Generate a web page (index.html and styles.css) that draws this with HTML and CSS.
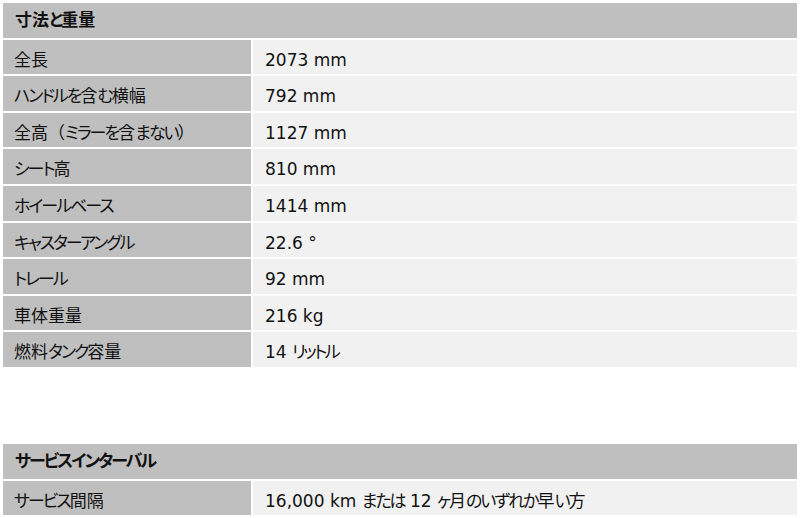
FILE: index.html
```html
<!DOCTYPE html>
<html lang="ja">
<head>
<meta charset="utf-8">
<title>仕様</title>
<link rel="stylesheet" href="styles.css">
</head>
<body>
<div class="page">
  <section class="spec">
    <div class="head">寸法<span class="kana">と</span>重量</div>
    <div class="label">全長</div><div class="value">2073 mm</div>
    <div class="label"><span class="kana">ハンドルを</span>含<span class="kana">む</span>横幅</div><div class="value">792 mm</div>
    <div class="label">全高<span class="fw">（</span><span class="kana">ミラーを</span>含<span class="kana">まない</span><span class="fw">）</span></div><div class="value">1127 mm</div>
    <div class="label"><span class="kana">シート</span>高</div><div class="value">810 mm</div>
    <div class="label"><span class="kana">ホイールベース</span></div><div class="value">1414 mm</div>
    <div class="label"><span class="kana">キャスターアングル</span></div><div class="value">22.6 °</div>
    <div class="label"><span class="kana">トレール</span></div><div class="value">92 mm</div>
    <div class="label">車体重量</div><div class="value">216 kg</div>
    <div class="label">燃料<span class="kana">タンク</span>容量</div><div class="value">14 <span class="kana narrow">リットル</span></div>
  </section>
  <section class="spec second">
    <div class="head"><span class="kana">サービスインターバル</span></div>
    <div class="label"><span class="kana">サービス</span>間隔</div><div class="value">16,000 km <span class="kana soft">または</span> 12 <span class="kana soft">ヶ</span>月<span class="kana soft">のいずれか</span>早<span class="kana soft">い</span>方</div>
  </section>
</div>
</body>
</html>
```

FILE: styles.css
```css
html, body {
  margin: 0;
  padding: 0;
  background: #ffffff;
}
body {
  font-family: "DejaVu Sans", "Noto Sans CJK JP", sans-serif;
  font-size: 17px;
  color: #111111;
  font-feature-settings: "palt";
}
.page {
  padding: 3px 3px 0 3px;
}
.spec {
  display: grid;
  grid-template-columns: 248px 1fr;
  grid-auto-rows: 34.6px;
  gap: 2px;
}
.second {
  margin-top: 77px;
}
.head {
  grid-column: 1 / 3;
  background: #bfbfbf;
  font-weight: bold;
  line-height: 30px;
  padding: 2px 0 0 12px;
  white-space: nowrap;
}
.label {
  background: #bfbfbf;
  line-height: 30px;
  padding: 5px 0 0 11px;
  white-space: nowrap;
}
.value {
  background: #f1f1f1;
  line-height: 30px;
  padding: 5px 0 0 12px;
  white-space: nowrap;
}
.kana {
  letter-spacing: -2px;
}
.kana.soft {
  letter-spacing: -2px;
}
.kana.narrow {
  letter-spacing: -2.5px;
}
.fw {
  font-feature-settings: normal;
}
```
